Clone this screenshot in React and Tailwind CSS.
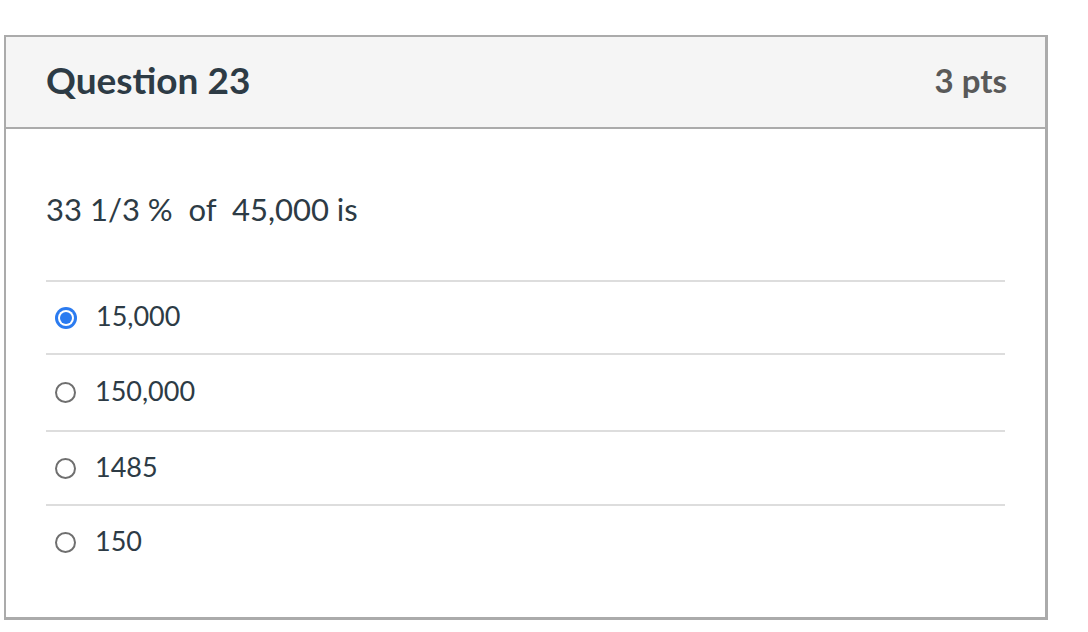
const options = [
  { label: '15,000', selected: true },
  { label: '150,000' },
  { label: '1485' },
  { label: '150' },
];

function Radio({ selected }) {
  if (selected) {
    return (
      <span className="flex h-[22px] w-[22px] items-center justify-center rounded-full bg-[#2b7bf0]">
        <span className="flex h-[16px] w-[16px] items-center justify-center rounded-full bg-white">
          <span className="h-[12px] w-[12px] rounded-full bg-[#2b7bf0]" />
        </span>
      </span>
    );
  }
  return <span className="h-[21px] w-[21px] rounded-full border-[2.5px] border-[#6f6f6f] bg-white" />;
}

export default function App() {
  return (
    <div className="min-h-[632px] bg-white pt-[35px] pl-[4px]" style={{ fontFamily: 'Lato, "Open Sans", sans-serif' }}>
      <div className="w-[1044px] h-[585px] border-[3px] border-[#ababab] border-t-2 border-l-2 border-r-[3px]">
        <div className="flex h-[92px] items-center justify-between border-b-[2px] border-[#ababab] bg-[#f5f5f5] pl-[40px] pr-[38px]">
          <h2 className="-mt-[4px] text-[37px] font-bold text-[#2d3b45]">Question 23</h2>
          <span className="-mt-[2px] text-[33px] font-bold text-[#595959]">3 pts</span>
        </div>
        <div className="px-[40px]">
          <div className="flex h-[151px] items-center pt-[10px] text-[31px] text-[#2d3b45]">
            <p className="whitespace-pre">33 1/3 %  of  45,000 is</p>
          </div>
          {options.map((o, i) => (
            <div
              key={o.label}
              className={`flex items-center border-t-[2px] border-[#dddddd] pl-[9px] ${i === 0 ? 'h-[73px]' : i === 1 ? 'h-[77px]' : 'h-[74px]'}`}
            >
              <Radio selected={o.selected} />
              <span className="ml-[19px] -mt-[2px] text-[27px] text-[#2d3b45]">{o.label}</span>
            </div>
          ))}
        </div>
      </div>
    </div>
  );
}
